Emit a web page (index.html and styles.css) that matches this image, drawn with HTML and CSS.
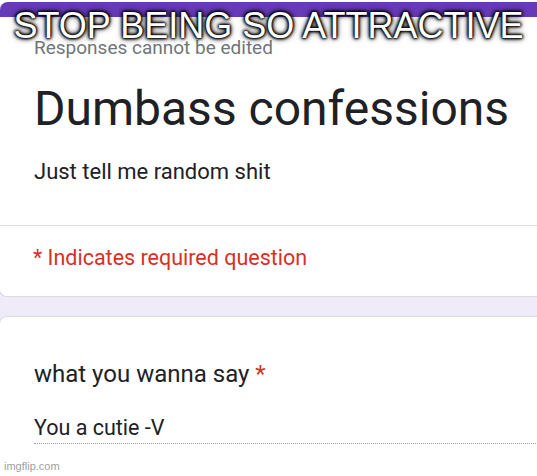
FILE: index.html
```html
<!DOCTYPE html>
<html lang="en">
<head>
    <meta charset="UTF-8">
    <title>Dumbass confessions</title>
    <link rel="stylesheet" href="styles.css">
</head>
<body>

    <div class="page">
        <!-- Header card -->
        <div class="card header-card">
            <div class="card-top"></div>
            <div class="card-body">
                <p class="note">Responses cannot be edited</p>
                <h1>Dumbass confessions</h1>
                <p class="desc">Just tell me random shit</p>
            </div>
            <div class="card-foot">
                <p class="required">* Indicates required question</p>
            </div>
        </div>

        <!-- Question card -->
        <div class="card question-card">
            <p class="question">what you wanna say <span class="star">*</span></p>
            <div class="answer">You a cutie -V</div>
        </div>
    </div>

    <div class="caption">STOP BEING SO ATTRACTIVE</div>
    <div class="watermark">imgflip.com</div>

</body>
</html>
```

FILE: styles.css
```css
html, body {
    margin: 0;
    height: 100%;
    overflow: hidden;
}

body {
    font-family: Roboto, "Liberation Sans", sans-serif;
    background-color: #f0ebf8;
    color: #202124;
    position: relative;
}

.page {
    padding-top: 2px;
    background: linear-gradient(#fff 0, #fff 20px, #f0ebf8 20px);
}

.card {
    background-color: #fff;
    border: 1px solid #dadce0;
    border-radius: 8px;
    margin-left: -1px;
    margin-right: -20px;
}

.header-card {
    border-top: none;
}

.card-top {
    height: 15px;
    background-color: #673ab7;
    border-radius: 8px 8px 0 0;
}

.card-body {
    padding: 19px 0 0 34px;
    height: 209px;
    box-sizing: border-box;
    border-bottom: 1px solid #dadce0;
}

.note {
    margin: 0;
    font-size: 19px;
    line-height: 24px;
    color: #70757a;
}

h1 {
    margin: 19px 0 0 0;
    font-size: 48px;
    font-weight: 400;
    line-height: 60px;
}

.desc {
    margin: 19px 0 0 0;
    font-size: 22px;
    line-height: 28px;
}

.card-foot {
    height: 70px;
    padding: 18px 0 0 33px;
    box-sizing: border-box;
}

.required {
    margin: 0;
    font-size: 21.5px;
    line-height: 28px;
    color: #d93025;
}

.question-card {
    margin-top: 19px;
    padding: 41px 0 40px 34px;
    border-bottom: none;
}

.question {
    margin: 0;
    font-size: 24px;
    line-height: 32px;
}

.star {
    color: #d93025;
}

.answer {
    margin-top: 24px;
    font-size: 21.5px;
    line-height: 28px;
    padding-bottom: 1px;
    border-bottom: 1px dotted #9aa0a6;
}

.caption {
    position: absolute;
    top: 4px;
    left: 0;
    right: 0;
    text-align: center;
    font-family: "Liberation Sans", Arial, sans-serif;
    font-size: 36px;
    line-height: 44px;
    color: #fff;
    text-shadow: 0 0 2px #000, 0 0 3px #000, 0 0 3px #000, 0 0 4px #000, 0 0 6px #000;
}

.watermark {
    position: absolute;
    left: 4px;
    bottom: 4px;
    font-family: "Liberation Sans", Arial, sans-serif;
    font-size: 11px;
    color: #a0a0a0;
}
```
